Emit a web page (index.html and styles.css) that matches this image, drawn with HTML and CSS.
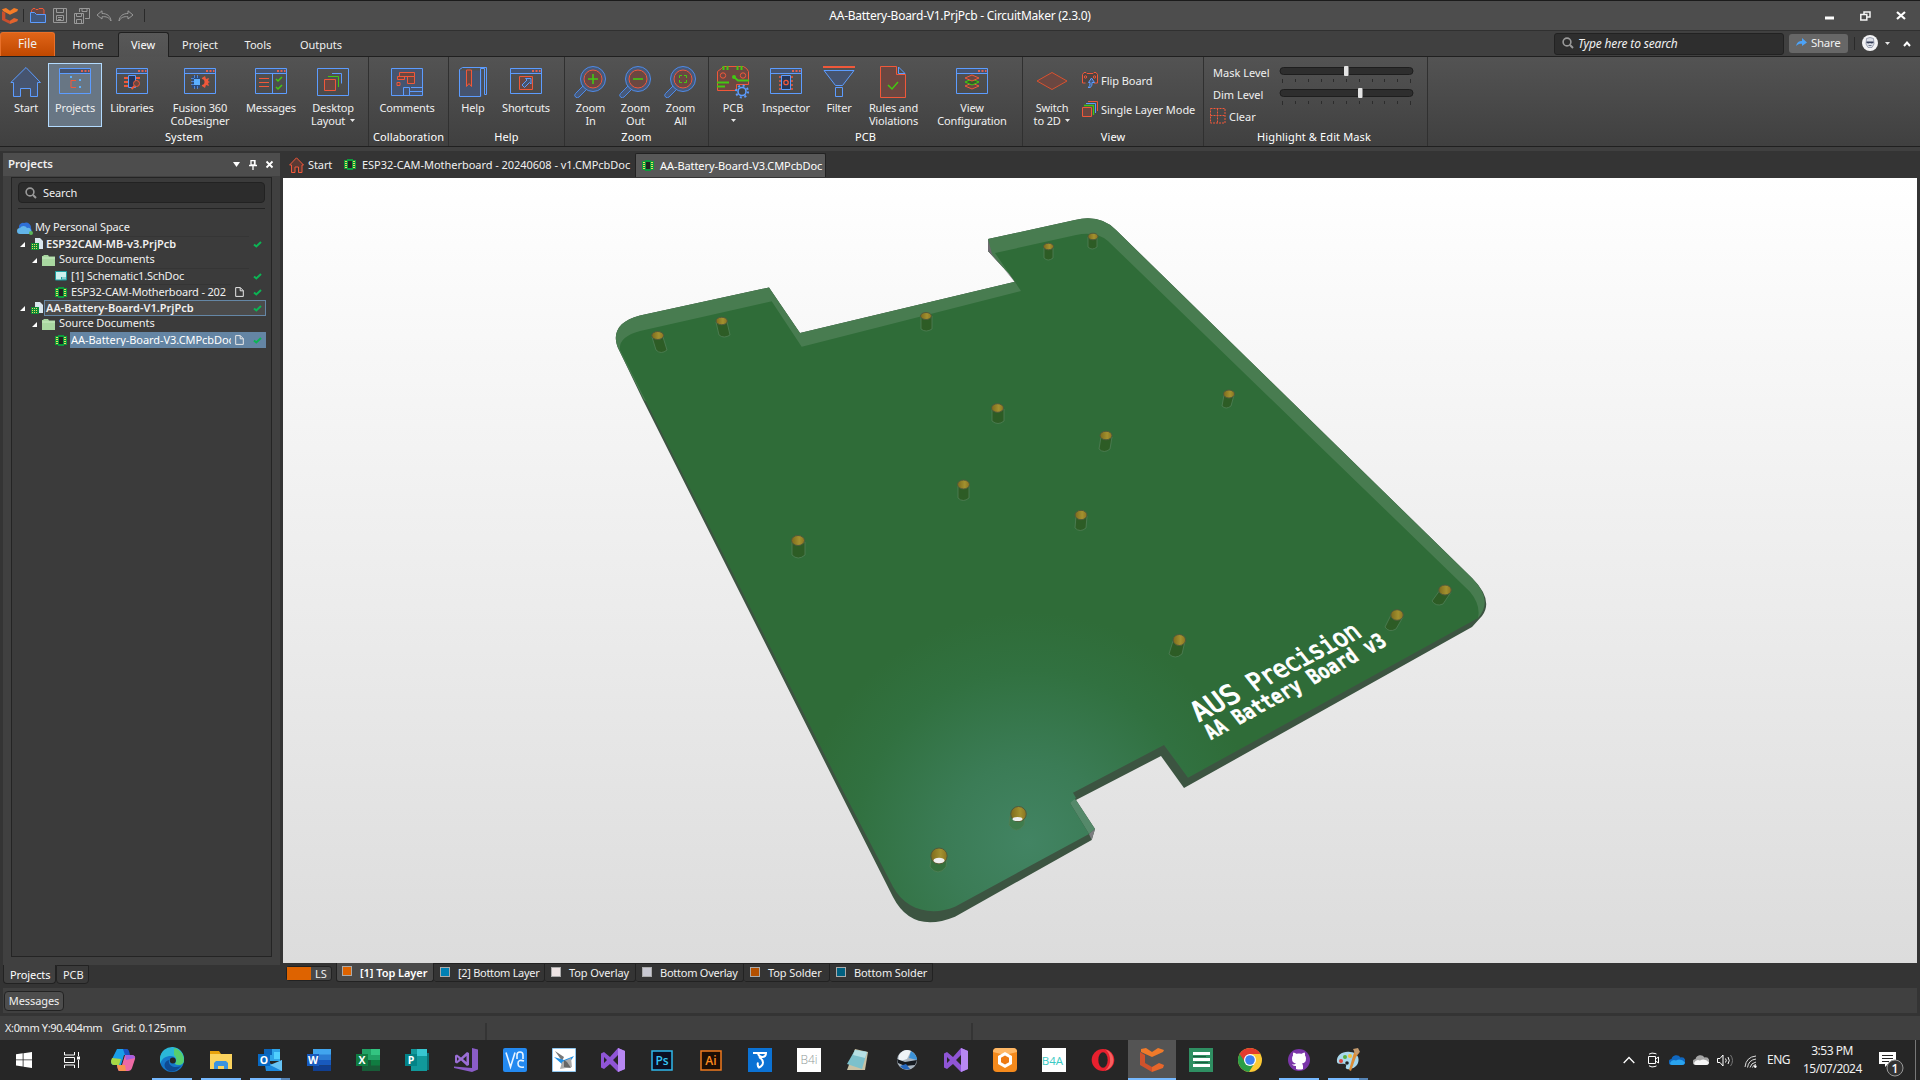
FILE: index.html
```html
<!DOCTYPE html>
<html lang="en">
<head>
<meta charset="utf-8">
<title>AA-Battery-Board-V1.PrjPcb - CircuitMaker (2.3.0)</title>
<link rel="stylesheet" href="styles.css">
</head>
<body>
<svg class="defs" width="0" height="0">
  <defs>
    <symbol id="logo" viewBox="0 0 24 24"><path d="M0 2l6-2 6 4 6-4 6 2-1 3-11 5L2 5z" fill="#f57c27"/><path d="M0 5l5 2v9l7 3v5L0 18z" fill="#c94f2e"/><path d="M12 19l6-4 6 2-1 3-11 4z" fill="#e2632d"/></symbol>
    <symbol id="win" viewBox="0 0 32 32"><path d="M.5 2.500h31v5H.5z" fill="#46546f"/><path d="M.5 2.500h31v25H.5zM0 7.500h32" fill="none" stroke="#5c9cff"/><path d="M22 4h2v2h-2zM25.500 4h2v2h-2zM29 4h1.500v2H29z" fill="#e0604f"/></symbol>
    <symbol id="lens" viewBox="0 0 32 32"><path d="M10 19L1.500 27.500a2.300 2.300 0 0 0 3.500 3.500L14 22z" fill="#46597a" stroke="#4f8be8"/><circle cx="19" cy="13" r="12.500" fill="#46597a" stroke="#4f8be8"/><circle cx="19" cy="13" r="9" fill="#6b4741" stroke="#f0583a"/></symbol>
    <symbol id="chip" viewBox="0 0 12 11"><path d="M0 1h3V0h6v1h3v9H9v1H3v-1H0z" fill="#0d9a3c"/><path d="M4 2h4v7H4z" fill="#222"/><path d="M1 2.500h2M1 4.500h2M1 6.500h2M1 8.500h2M9 2.500h2M9 4.500h2M9 6.500h2M9 8.500h2" stroke="#e6e25a"/></symbol>
    <symbol id="tick" viewBox="0 0 9 7"><path d="M1 3.500l2.300 2L8 1" fill="none" stroke="#0cb454" stroke-width="2"/></symbol>
    <symbol id="page" viewBox="0 0 9 10"><path d="M.7.600h4.600l3 3v5.800H.7zM5.200.600v3.200h3.100" fill="none" stroke="#e8e8e8"/></symbol>
    <symbol id="prj" viewBox="0 0 12 12"><path d="M4 0h5l3 3v8H4z" fill="#d9e6ee"/><path d="M0 5h8v7H0z" fill="#0d8a38"/><path d="M1 6.500h6M1 8.500h6M1 10.500h6" stroke="#e6e25a" stroke-dasharray="1 1"/></symbol>
    <symbol id="folder" viewBox="0 0 13 11"><path d="M0 1h1l1-1h4l1 1.500h6V11H0z" fill="#a9d8a1"/><path d="M0 3h13" stroke="#c9ecc2"/></symbol>
    <symbol id="open" viewBox="0 0 5 5"><path d="M5 0v5H0z" fill="#fff"/></symbol>
    <symbol id="mag" viewBox="0 0 12 12"><circle cx="5" cy="5" r="3.900" fill="none" stroke="#9a9a9a" stroke-width="1.600"/><path d="M8 8l3 3" stroke="#9a9a9a" stroke-width="2"/></symbol>
    <symbol id="down" viewBox="0 0 5 3"><path d="M0 0h5L2.500 3z" fill="#e8e8e8"/></symbol>
    <symbol id="vs" viewBox="0 0 24 24"><path d="M17 0l7 3v18l-7 3-8-8-6 5-3-1.500v-14L3 4l6 5zM17 7l-5 5 5 5zM3 9v6l3-3z" fill="#8f55d6" fill-rule="evenodd"/><path d="M17 0l7 3v18l-7 3z" fill="#b787f2"/></symbol>
    <symbol id="cloud" viewBox="0 0 16 10"><path d="M3 10a3 3 0 0 1-.5-6A5 5 0 0 1 11.500 2.500 3.800 3.800 0 0 1 13.500 10z"/></symbol>
  </defs>
</svg>

<header class="titlebar">
  <div class="quick">
    <svg width="16" height="16"><use href="#logo"/></svg><i class="vbar"></i>
    <svg class="q1" width="16" height="16" viewBox="0 0 16 16" fill="none"><path d="M1.500 7V2.500L3 .5h2l1 1h2l1-1h4l1 1.500V7" fill="#6b4741" stroke="#f0583a"/><path d="M.5 14.500v-10h4l2 2h9v8z" fill="#40587f" stroke="#5c9cff"/></svg>
    <svg class="q2" width="14" height="16" viewBox="0 0 14 16" fill="none" stroke="#999"><path d="M.5.5h13v14H.5zM3.500.5v4h7v-4M3.500 7.500h7v5h-7zM5 9.500h4M5 11.500h3"/></svg>
    <svg class="q3" width="16" height="16" viewBox="0 0 16 16" fill="none" stroke="#999"><path d="M.5 5.500h9v10h-9zM2.500 5.500v3h5v-3M2.500 15.500v-4h5v4M5.500 4V.5h10v10H11M8 .5v3h5v-3"/></svg>
    <svg class="q4" width="16" height="12" viewBox="0 0 16 12" fill="none" stroke="#999"><path d="M6 .8L1 5l5 4V6.800c4-.6 7 .5 9 4.200-.5-5-4-7.500-9-7.500z"/></svg>
    <svg class="q5" width="16" height="12" viewBox="0 0 16 12" fill="none" stroke="#999"><path d="M10 .8L15 5l-5 4V6.800c-4-.6-7 .5-9 4.200.5-5 4-7.500 9-7.500z"/></svg><i class="vbar"></i>
  </div>
  <h1>AA-Battery-Board-V1.PrjPcb - CircuitMaker (2.3.0)</h1>
  <div class="wincontrols">
    <svg width="10" height="10" viewBox="0 0 10 10"><path d="M0 5.500h9v3H0z" fill="#fff"/></svg>
    <svg width="11" height="10" viewBox="0 0 11 10" fill="none" stroke="#f4f4f4" stroke-width="1.500"><path d="M.8 3.500h6v5.500h-6zM4 3V1h6v5H7"/></svg>
    <svg width="10" height="9" viewBox="0 0 10 9"><path d="M1 1l8 7M9 1L1 8" stroke="#fff" stroke-width="2.200"/></svg>
  </div>
</header>

<nav class="tabs">
  <b class="file">File</b>
  <span class="tab home">Home</span><span class="tab active">View</span><span class="tab proj">Project</span><span class="tab tools">Tools</span><span class="tab outs">Outputs</span>
  <div class="tabright">
    <div class="typehere"><svg width="12" height="12"><use href="#mag"/></svg><em>Type here to search</em></div>
    <div class="share"><svg width="11" height="9" viewBox="0 0 11 9"><path d="M0 8c1-4 3-5 6-5V0l5 4.500L6 8V5.800C4 5.600 2 6 0 8z" fill="#4da3f7"/></svg>Share</div>
    <i class="vbar"></i>
    <svg width="16" height="16" viewBox="0 0 16 16"><circle cx="8" cy="8" r="8" fill="#f3f3f5"/><path d="M4.500 3.500Q8 1.500 11.500 3.500L12 9l-2 3.500H6L4 9z" fill="#dcdfe6" stroke="#8a90a4" stroke-width=".8"/><path d="M4.500 6.500h7V8L9.500 8.500 8 8l-1.500.5-2-.5z" fill="#353d58"/><path d="M6.500 10.500h3" stroke="#6b738a"/></svg>
    <svg class="dd" width="5" height="3"><use href="#down"/></svg>
    <svg class="up" width="8" height="6" viewBox="0 0 8 6"><path d="M1 5l3-3.500L7 5" fill="none" stroke="#fff" stroke-width="2"/></svg>
  </div>
</nav>

<section class="ribbon">
  <div class="group g-system">
    <div class="tools-row">
      <div class="btn w44"><svg width="32" height="32" viewBox="0 0 32 32"><path d="M3.500 16.500v14h7v-8h10v8h7v-14h3L16 1.500.8 16.500z" fill="#46546f" stroke="#5c9cff"/></svg><span>Start</span></div>
      <div class="btn w54 on"><svg width="32" height="32" viewBox="0 0 32 32"><use href="#win"/><path d="M17 14.500h-5v7h5" fill="none" stroke="#f0583a"/><path d="M11 10h2v2h-2zM20 13h2v2h-2zM20 20h2v2h-2z" fill="#5cb0ff"/></svg><span>Projects</span></div>
      <div class="btn w60"><svg width="32" height="32" viewBox="0 0 32 32"><use href="#win"/><path d="M8 12h4M8 16h4M8 20h4M20 12h4" stroke="#f0583a" stroke-width="2"/><path d="M12.500 9.500h7v12h-7z" fill="#26375a" stroke="#5c9cff"/><circle cx="20.500" cy="17.500" r="3" fill="#6b4741" stroke="#f0583a"/><path d="M18.500 20l-3 3" stroke="#f0583a" stroke-width="2"/></svg><span>Libraries</span></div>
      <div class="btn w76"><svg width="32" height="32" viewBox="0 0 32 32"><use href="#win"/><path d="M18 9v3l3-2 1 3 3-1-1 3 2 1-2 1 1 3-3-1-1 3-3-2v3z" fill="#f0583a"/><circle cx="17.500" cy="16" r="3" fill="#444"/><path d="M8 10h8v12H8z" fill="#2d4a78"/><path d="M10 13h6v6h-6z" fill="#5cb0ff"/><path d="M7 12.500h3M7 15.500h3M7 18.500h3M10.500 9v3M13.500 9v3M10.500 20v3M13.500 20v3" stroke="#5c9cff" stroke-width=".7"/></svg><span>Fusion 360<br>CoDesigner</span></div>
      <div class="btn w66"><svg width="32" height="32" viewBox="0 0 32 32"><use href="#win"/><path d="M4 12.500h10M4 16.500h10M4 20.500h10" stroke="#f0583a"/><path d="M17.500 8v19" stroke="#5c9cff"/><path d="M21 13l2 2 4-4M21 21l2 2 4-4" fill="none" stroke="#43c813" stroke-width="1.500"/></svg><span>Messages</span></div>
      <div class="btn w58"><svg width="32" height="32" viewBox="0 0 32 32"><path d="M.5 2.500h31v27H.5z" fill="none" stroke="#5c9cff"/><path d="M15 7.500h9.500v10" fill="none" stroke="#5c9cff"/><path d="M11 10.500h10.500V21" fill="none" stroke="#43c813"/><path d="M7.500 13.500h11v11h-11z" fill="#6b4741" stroke="#f0583a"/></svg><span>Desktop<br>Layout <svg width="5" height="3"><use href="#down"/></svg></span></div>
    </div>
    <h2>System</h2>
  </div>
  <div class="group g-collab">
    <div class="tools-row">
      <div class="btn w76"><svg width="32" height="32" viewBox="0 0 32 32"><path d="M.5 2.500h31v27H.5z" fill="#46546f" stroke="#5c9cff"/><path d="M8.500 6.500h15v4h-15zM6.500 10.500h7v3h-7zM16.500 10.500h7v7h-7zM6 16.500h3v3H6z" fill="#6b4741" stroke="#f0583a"/><path d="M12.500 21.500h6v8h-6zM20 21.500h11.500M19 25.500h12" fill="none" stroke="#5c9cff"/></svg><span>Comments</span></div>
    </div>
    <h2>Collaboration</h2>
  </div>
  <div class="group g-help">
    <div class="tools-row">
      <div class="btn w44"><svg width="28" height="32" viewBox="0 0 28 32"><path d="M.5 4.500h23v26H.5z" fill="#46546f"/><path d="M.5 30.500v-27l3-2h24v27h-2v-26h-4v28z" fill="none" stroke="#5c9cff"/><path d="M7.500 4v16.500l2.500-3 2.500 3V4z" fill="#6b4741" stroke="#f0583a"/></svg><span>Help</span></div>
      <div class="btn w62"><svg width="32" height="32" viewBox="0 0 32 32"><use href="#win"/><path d="M9.500 10.500h13v13h-13z" fill="#6b4741" stroke="#f0583a"/><path d="M12 19l5-5-1.500-1.500H21V18l-1.500-1.500-5 5z" fill="#46546f" stroke="#5c9cff"/></svg><span>Shortcuts</span></div>
    </div>
    <h2>Help</h2>
  </div>
  <div class="group g-zoom">
    <div class="tools-row">
      <div class="btn w45"><svg width="32" height="32" viewBox="0 0 32 32"><use href="#lens"/><path d="M14 13h10M19 8v10" stroke="#43c813" stroke-width="1.600"/></svg><span>Zoom<br>In</span></div>
      <div class="btn w45"><svg width="32" height="32" viewBox="0 0 32 32"><use href="#lens"/><path d="M14 13h10" stroke="#43c813" stroke-width="1.600"/></svg><span>Zoom<br>Out</span></div>
      <div class="btn w45"><svg width="32" height="32" viewBox="0 0 32 32"><use href="#lens"/><path d="M15.500 12V9.500H18M20 9.500h2.500V12M22.500 14v2.500H20M18 16.500h-2.500V14" fill="none" stroke="#43c813"/></svg><span>Zoom<br>All</span></div>
    </div>
    <h2>Zoom</h2>
  </div>
  <div class="group g-pcb">
    <div class="tools-row">
      <div class="btn w44"><svg width="34" height="32" viewBox="0 0 34 32"><path d="M1.500 24.500v-19l4-3 2-2h20l3 2 2 3v13h-12v6z" fill="#6b4741" stroke="#f0583a"/><path d="M7.500 0v4M11.500 0v4M21.500 0v4M25.500 0v4" stroke="#43c813" stroke-width="2"/><circle cx="7" cy="9.500" r="2.700" fill="none" stroke="#f0583a"/><circle cx="27" cy="9.500" r="2.700" fill="none" stroke="#f0583a"/><path d="M1 16.500h12M1 20.500h8M18 11l4 3.500h11" stroke="#43c813" stroke-width="1.800" fill="none"/><circle cx="18" cy="11" r="2" fill="#43c813"/><circle cx="26" cy="25.500" r="4" fill="#444" stroke="#5c9cff" stroke-width="1.600"/><circle cx="26" cy="25.500" r="6" fill="none" stroke="#5c9cff" stroke-width="2" stroke-dasharray="2 2.700"/></svg><span>PCB<br><svg class="c" width="5" height="3"><use href="#down"/></svg></span></div>
      <div class="btn w62"><svg width="32" height="32" viewBox="0 0 32 32"><use href="#win"/><path d="M9 11h3M9 15h3M9 19h3M9 23h3M20 11h3M20 15h3M20 19h3M20 23h3" stroke="#f0583a" stroke-width="1.600"/><path d="M11.500 9.500h9v14h-9z" fill="#26375a" stroke="#5c9cff"/><circle cx="16" cy="16.500" r="2.200" fill="none" stroke="#f0583a" stroke-width="1.300"/></svg><span>Inspector</span></div>
      <div class="btn w44"><svg width="32" height="32" viewBox="0 0 32 32"><path d="M0 1h32" stroke="#f0583a" stroke-width="2"/><path d="M1 4.500h30L19.500 19.500h-7z" fill="#46546f" stroke="#5c9cff"/><path d="M12.500 21.500h7v9h-7z" fill="none" stroke="#5c9cff"/></svg><span>Filter</span></div>
      <div class="btn w65"><svg width="28" height="32" viewBox="0 0 28 32"><path d="M1.500.5h16v8h9v23h-25z" fill="#6b4741" stroke="#f0583a"/><path d="M19.500 1v6.500h6.500z" fill="none" stroke="#5c9cff"/><path d="M9 19l4 4 6-7" fill="none" stroke="#43c813" stroke-width="1.500"/></svg><span>Rules and<br>Violations</span></div>
      <div class="btn w92"><svg width="32" height="32" viewBox="0 0 32 32"><use href="#win"/><path d="M9 20l7-3 7 3-7 3z" fill="#6b4741" stroke="#f0583a"/><path d="M9 16l7-3 7 3-7 3z" fill="#355d2a" stroke="#43c813"/><path d="M9 12l7-3 7 3-7 3z" fill="#6b4741" stroke="#f0583a"/></svg><span>View<br>Configuration</span></div>
    </div>
    <h2>PCB</h2>
  </div>
  <div class="group g-view">
    <div class="tools-row">
      <div class="btn w50"><svg width="32" height="32" viewBox="0 0 32 32"><path d="M1 15l15-8.500L31 15l-15 8.500z" fill="#6b4741" stroke="#d9522f"/></svg><span>Switch<br>to 2D <svg width="5" height="3"><use href="#down"/></svg></span></div>
      <div class="smalls">
        <div><svg width="16" height="16" viewBox="0 0 16 16"><path d="M.5 11V2.500L2 .5h12l1.500 2V11z" fill="#4d4341"/><path d="M.5 11V2.500L2 .5h2l1 1h6l1-1h2l1.500 2V11M.5 11h3M12 11h3.500" fill="none" stroke="#f0583a"/><circle cx="3.500" cy="5" r="1.200" fill="none" stroke="#f0583a"/><circle cx="12.500" cy="5" r="1.200" fill="none" stroke="#f0583a"/><path d="M6 15.500h2c2-1 2-3 2-5h2.500L9.500 6 6.500 10.500H8c0 2 0 4-2 5z" fill="#40587f" stroke="#5c9cff"/></svg>Flip Board</div>
        <div><svg width="16" height="16" viewBox="0 0 16 16" fill="none"><path d="M6 .5h9.500V10" stroke="#f0583a"/><path d="M4 2.500h9.500V12" stroke="#5c9cff"/><path d="M2 4.500h9.500V14" stroke="#43c813" stroke-width="1.300"/><path d="M.5 6.500h9v9h-9z" fill="#6b4741" stroke="#f0583a"/></svg>Single Layer Mode</div>
      </div>
    </div>
    <h2>View</h2>
  </div>
  <div class="group g-mask">
    <div class="mask">
      <div class="lvl"><label>Mask Level</label><svg width="136" height="22" viewBox="0 0 136 22"><rect x="1" y="4.500" width="133" height="7" rx="3.500" fill="#2e2e2e" stroke="#1e1e1e"/><path d="M3.500 16v4M16.500 16v3M29.500 16v3M42.500 16v3M54.500 16v3M67.500 16v3M80.500 16v3M93.500 16v3M105.500 16v3M118.500 16v3M131.500 16v4" stroke="#2c2c2c"/><rect x="65" y="3" width="4.500" height="10" rx="1" fill="#e4e4e4"/></svg></div>
      <div class="lvl"><label>Dim Level</label><svg width="136" height="22" viewBox="0 0 136 22"><rect x="1" y="4.500" width="133" height="7" rx="3.500" fill="#2e2e2e" stroke="#1e1e1e"/><path d="M3.500 16v4M16.500 16v3M29.500 16v3M42.500 16v3M54.500 16v3M67.500 16v3M80.500 16v3M93.500 16v3M105.500 16v3M118.500 16v3M131.500 16v4" stroke="#2c2c2c"/><rect x="79" y="3" width="4.500" height="10" rx="1" fill="#e4e4e4"/></svg></div>
      <div class="clear"><svg width="16" height="16" viewBox="0 0 16 16"><path d="M.5.5h14.500v14.500H.5zM7.500.5v15M.5 7.500h15" fill="none" stroke="#f0583a" stroke-dasharray="2 1"/></svg>Clear</div>
    </div>
    <h2>Highlight &amp; Edit Mask</h2>
  </div>
</section>

<main class="work">
  <aside class="panel">
    <div class="phead"><b>Projects</b>
      <svg width="7" height="5" viewBox="0 0 7 5"><path d="M0 0h7L3.500 5z" fill="#fff"/></svg>
      <svg width="8" height="10" viewBox="0 0 8 10"><path d="M2 .700h4V5H2zM5.500 0v5M0 5.500h8M4 6v4" fill="none" stroke="#fff" stroke-width="1.300"/></svg>
      <svg width="7" height="7" viewBox="0 0 7 7"><path d="M.5.5l6 6M6.500.5l-6 6" stroke="#fff" stroke-width="1.800"/></svg>
    </div>
    <div class="pbox">
      <div class="psearch"><svg width="12" height="12"><use href="#mag"/></svg><span>Search</span></div>
      <hr>
      <div class="tree">
        <div class="row r0"><svg width="16" height="13" viewBox="0 0 16 13"><path d="M5 9a4 4 0 0 1 2-8 5 5 0 0 1 7 5l1 4z" fill="#2f6fd6"/><path d="M3 12a3 3 0 0 1 0-6 4 4 0 0 1 7 0 3 3 0 0 1 2 6z" fill="#62b5ea"/><circle cx="14" cy="11" r="2" fill="#5bb85b"/></svg><span>My Personal Space</span></div>
        <div class="row r1 line"><svg width="5" height="5"><use href="#open"/></svg><svg width="12" height="12"><use href="#prj"/></svg><b class="cell">ESP32CAM-MB-v3.PrjPcb</b><svg class="t" width="9" height="7"><use href="#tick"/></svg></div>
        <div class="row r2"><svg width="5" height="5"><use href="#open"/></svg><svg width="13" height="11"><use href="#folder"/></svg><span>Source Documents</span></div>
        <div class="row r3"><svg width="12" height="10" viewBox="0 0 12 10"><path d="M.5.500h11v8.500H.5z" fill="#cdf1ef" stroke="#1d9fa0"/><path d="M6 6h5v2.500H6z" fill="#1d9fa0"/><path d="M7 7h4" stroke="#fff"/></svg><span class="cell">[1] Schematic1.SchDoc</span><svg class="t" width="9" height="7"><use href="#tick"/></svg></div>
        <div class="row r3"><svg width="12" height="11"><use href="#chip"/></svg><span class="cell">ESP32-CAM-Motherboard - 202</span><svg class="pg" width="9" height="10"><use href="#page"/></svg><svg class="t" width="9" height="7"><use href="#tick"/></svg></div>
        <div class="row r1"><svg width="5" height="5"><use href="#open"/></svg><svg width="12" height="12"><use href="#prj"/></svg><div class="cell boxed"><b>AA-Battery-Board-V1.PrjPcb</b><svg class="t" width="9" height="7"><use href="#tick"/></svg></div></div>
        <div class="row r2"><svg width="5" height="5"><use href="#open"/></svg><svg width="13" height="11"><use href="#folder"/></svg><span>Source Documents</span></div>
        <div class="row r3"><svg width="12" height="11"><use href="#chip"/></svg><div class="cell sel"><span class="clip">AA-Battery-Board-V3.CMPcbDoc</span><svg class="pg" width="9" height="10"><use href="#page"/></svg><svg class="t" width="9" height="7"><use href="#tick"/></svg></div></div>
      </div>
    </div>
    <div class="ptabs"><span class="cur">Projects</span><span>PCB</span></div>
  </aside>

  <section class="editor">
    <div class="docs">
      <div class="doc d1"><svg width="15" height="16" viewBox="0 0 15 16"><path d="M2.500 8v7.500H6V10h3.500v5.500H13V8h1.500L7.500.8.600 8z" fill="#5a3a34" stroke="#f0583a"/></svg>Start</div>
      <div class="doc d2"><svg width="12" height="11"><use href="#chip"/></svg>ESP32-CAM-Motherboard - 20240608 - v1.CMPcbDoc</div>
      <div class="doc d3"><svg width="12" height="11"><use href="#chip"/></svg>AA-Battery-Board-V3.CMPcbDoc</div>
    </div>
    <svg class="canvas" width="1634" height="785" viewBox="283 178 1634 785">
      <defs>
        <linearGradient id="bg" x1="0" y1="0" x2="0" y2="1"><stop offset="0" stop-color="#fff"/><stop offset="1" stop-color="#dcdcdc"/></linearGradient>
        <radialGradient id="glow" gradientUnits="userSpaceOnUse" cx="1028" cy="842" r="230"><stop offset="0" stop-color="#428463"/><stop offset=".35" stop-color="#3b7c56"/><stop offset=".75" stop-color="#317140"/><stop offset="1" stop-color="#2f6c38"/></radialGradient>
        <linearGradient id="gold"><stop offset="0" stop-color="#7d6a1c"/><stop offset=".6" stop-color="#a3912f"/><stop offset="1" stop-color="#8a7420"/></linearGradient>
      </defs>
      <path d="M283 178h1634v785H283z" fill="url(#bg)"/>
      <path d="M619 350C611 334 618 321 640 315.500L769 287.500 800 333 1016 281.500 988 251V239L1075 220Q1100 214 1116 230L1472 578Q1494 600 1482 616L1472 627 1184 788 1161 756 1076 800 1095 829 1091.700 840 955 916.700Q912 934 893 897L840 792 643 400z" fill="#3c5441"/>
      <path d="M619 350C611 334 618 321 640 315.500L769 287.500 800 333 1016 281.500 988 251V239L1075 220Q1100 214 1116 230L1472 578Q1494 600 1478 618L1420 640 1100 700 644 400z" fill="#487c50"/>
      <path d="M988 239v12l28 31 6 9-30-37z" fill="#6e6a70"/>
      <path d="M1073 798l3 2 19 29-6 5-19-31z" fill="#55896a"/><path d="M1095 829l-6 5 2.700 6z" fill="#7c7d80"/>
      <path d="M620 350Q618 337 640 331L771.700 301.300 801.700 346.700 1021 291 995 253 1076 235Q1096 231 1108 241L1470 591.700Q1481 605 1478 618L1188 777.700 1164 745 1073 792.700 1076 798 1070 803 1089 834 955 906.700C930 917 905 909 893 886.700L840 785z" fill="url(#glow)"/>
      <g stroke="#507f57" stroke-width=".8" fill="#2d5c25">
        <path d="M652 337l4 13q5 5 11 0l-4-13z"/><path d="M716 322l3 13q5 4 11 0l-3-13z"/><path d="M921 316v13q5 4 11 0v-13z"/>
        <path d="M1044 248v10q4 4 9 0v-10z"/><path d="M1088 237v10q4 4 9 0v-10z"/><path d="M992 409v12q6 5 12 0v-12z"/><path d="M1101 437l-2 12q5 5 11 0l2-12z"/><path d="M1224 395l-2 11q4 4 9 0l3-11z"/><path d="M958 486v12q5 5 11 0v-12z"/><path d="M1076 516l-1 12q5 5 11 0l1-12z"/><path d="M792 542v13q6 6 13 0v-13z"/>
        <path d="M1173 641l-4 13q6 6 13 0l3-13z"/><path d="M1391 615l-6 12q4 6 11 2l7-12z"/><path d="M1440 590l-8 11q4 6 11 3l8-12z"/>
        <path d="M1010 816l-1 9q7 10 15 0l1-9z" fill="#3f7c4c"/><path d="M931 858l-1 9q8 10 16 0l1-9z" fill="#35703c"/>
      </g>
      <g fill="url(#gold)" stroke="#4f5a3c" stroke-width="1">
        <ellipse cx="657.700" cy="335.500" rx="6" ry="4"/><ellipse cx="721.700" cy="321" rx="5.700" ry="3.800"/><ellipse cx="926" cy="316" rx="5.500" ry="3.500"/><ellipse cx="1048.500" cy="246.500" rx="5" ry="3.300"/><ellipse cx="1093" cy="236.500" rx="5" ry="3.300"/><ellipse cx="997.500" cy="408" rx="6" ry="4.300"/><ellipse cx="1106" cy="435.500" rx="6" ry="4.300"/><ellipse cx="1229" cy="394" rx="5.500" ry="4"/><ellipse cx="963.500" cy="484.500" rx="6" ry="4.500"/><ellipse cx="1081" cy="515" rx="6" ry="4.700"/><ellipse cx="798" cy="540.500" rx="6.500" ry="5"/><ellipse cx="1179.300" cy="640" rx="6.300" ry="5.500"/><ellipse cx="1397" cy="615" rx="6.300" ry="5.300"/><ellipse cx="1445" cy="590" rx="6.300" ry="5"/><ellipse cx="1018.500" cy="814" rx="7.800" ry="7.500"/><ellipse cx="939" cy="856" rx="8.200" ry="8"/>
      </g>
      <ellipse cx="1017.500" cy="819" rx="5" ry="2" fill="#eee"/><ellipse cx="939" cy="860.500" rx="5.500" ry="2.700" fill="#eee"/>
      <g class="silk">
        <text transform="matrix(.887 -.462 .74 .95 1199 722)" font-size="23.500" textLength="50" lengthAdjust="spacingAndGlyphs">AUS</text>
        <text transform="matrix(.887 -.462 .7 .88 1255 692)" font-size="23.500" textLength="122">Precision</text>
        <text class="fine" transform="matrix(.882 -.475 .77 .99 1211 740)" font-size="17.400" font-weight="bold" textLength="201">AA Battery Board v3</text>
      </g>
    </svg>
    <div class="layers">
      <div class="ls"><i></i>LS</div>
      <div class="ly l1 cur"><i class="c-top"></i>[1] Top Layer</div>
      <div class="ly l2"><i class="c-bot"></i>[2] Bottom Layer</div>
      <div class="ly l3"><i class="c-to"></i>Top Overlay</div>
      <div class="ly l4"><i class="c-bo"></i>Bottom Overlay</div>
      <div class="ly l5"><i class="c-ts"></i>Top Solder</div>
      <div class="ly l6"><i class="c-bs"></i>Bottom Solder</div>
    </div>
  </section>
</main>

<div class="msgbar"><span>Messages</span></div>
<div class="status"><span class="xy">X:0mm Y:90.404mm</span><span class="grid">Grid: 0.125mm</span><i class="s1"></i><i class="s2"></i></div>

<footer class="taskbar">
  <div class="slot s48"><svg width="16" height="16" viewBox="0 0 16 16"><path d="M0 2.300l6.700-1v6.200H0zM7.500 1.200L16 0v7.500H7.500zM0 8.300h6.700v6.200L0 13.500zM7.500 8.300H16V16l-8.500-1.300z" fill="#fff"/></svg></div>
  <div class="slot s48 tv"><svg width="16" height="16" viewBox="0 0 16 16" fill="none" stroke="#fff"><path d="M.5 0v3h10V0M.5 16v-3h10v3M.5 5.500h10v5H.5zM14.500 0v4M14.500 8v8"/><path d="M13 4.500h3v3h-3z" fill="#fff" stroke="none"/></svg></div>
  <div class="slot"><svg width="24" height="22" viewBox="0 0 24 22"><path d="M6 0h10l2 6h-5L10 16H3q-3 0-3-4z" fill="#1a9ee8"/><path d="M1 9l9 1-2 6H3q-3 0-3-4z" fill="#a8d843"/><path d="M12 0h4q2 0 3 6h-5z" fill="#1b52c4"/><path d="M14 6h6q5 0 4 4l-3 9q-1 3-4 3H8q-1 0-2-6h5z" fill="#ee6aa5"/><path d="M14 6h6q4 0 4 3l-9 2z" fill="#a45fe0"/><path d="M6 16h8l1 6H9q-2 0-3-6z" fill="#f8934e"/></svg></div>
  <div class="slot run"><svg width="24" height="24" viewBox="0 0 24 24"><circle cx="12" cy="12" r="12" fill="#1577c8"/><path d="M0 10A12 12 0 0 1 24 12c0 5-5 6-9 4 2-3 1-8-4-8S2 10 0 16z" fill="#2bb7d8"/><path d="M14 .2C21 1 25 9 23.600 14c-2 4-6 3-8.600 2 2-2 2-7-1-9z" fill="#56cf6d"/><path d="M9 12c-1 5 4 9 12 6-4 6-11 7-15 3-3-4-1-8 3-9z" fill="#0f4a92"/><circle cx="12.800" cy="12.500" r="3" fill="#252525"/></svg></div>
  <div class="slot run"><svg width="22" height="18" viewBox="0 0 22 18"><path d="M0 0h9l2 3H0z" fill="#e8a20c"/><path d="M0 3h22v15H0z" fill="#fbd35e"/><path d="M4 18v-6l2-2h10l2 2v6h-4v-3H8v3z" fill="#3c93e0"/></svg></div>
  <div class="slot run multi"><svg width="24" height="22" viewBox="0 0 24 22"><path d="M6 0h16v12H6z" fill="#2ea4e8"/><path d="M6 0h8v6H6z" fill="#0c64b8"/><path d="M16 3h6v7h-6z" fill="#50d0ff"/><path d="M6 11l9 5 9-5v11H8z" fill="#1c87dc"/><path d="M24 11v11L12 16z" fill="#66c3f5"/><path d="M0 5h12v12H0z" fill="#0768c2"/><text x="6" y="15" class="ico">O</text></svg></div>
  <div class="slot"><svg width="24" height="22" viewBox="0 0 24 22"><path d="M6 0h18v6H6z" fill="#41a5ee"/><path d="M6 5.500h18V11H6z" fill="#2b7cd3"/><path d="M6 11h18v5.500H6z" fill="#185abd"/><path d="M6 16.500h18V22H6z" fill="#103f91"/><path d="M0 5h12v12H0z" fill="#185abd"/><text x="6" y="15" class="ico">W</text></svg></div>
  <div class="slot"><svg width="24" height="22" viewBox="0 0 24 22"><path d="M6 0h18v11H6z" fill="#21a366"/><path d="M15 0h9v6h-9z" fill="#33c481"/><path d="M6 11h18v11H6z" fill="#185c37"/><path d="M15 11h9v5.500h-9z" fill="#107c41"/><path d="M0 5h12v12H0z" fill="#107c41"/><text x="6" y="15" class="ico">X</text></svg></div>
  <div class="slot"><svg width="24" height="22" viewBox="0 0 24 22"><path d="M6 0h16v22H6z" fill="#11999b"/><path d="M12 0h10v7H12z" fill="#37c6d0"/><path d="M22 4h2v17h-2z" fill="#0b6f74"/><path d="M0 5h12v12H0z" fill="#038387"/><text x="6" y="15" class="ico">P</text></svg></div>
  <div class="slot"><svg width="24" height="24" viewBox="0 0 24 24"><path d="M18 0l6 1.500v20L18 24 0 20v-1.500l18 1.500z" fill="#8a5cc7"/><path d="M3 6.500l4 3 6-5.500 2 1v12l-2 1-6-5.500-4 3-2-1v-7zM12.500 8L9 11l3.500 3zM3 9v4l2-2z" fill="#9b6ed6" fill-rule="evenodd"/></svg></div>
  <div class="slot"><svg width="24" height="24" viewBox="0 0 24 24"><rect width="24" height="24" rx="2" fill="#2389f0"/><path d="M3 4.500L7.500 19 12 4.500M14 11V7q0-3 3-3t3 3v4M21 13q-6-2-6 2.500t6 3.500" fill="none" stroke="#e9f4ff" stroke-width="1.600"/></svg></div>
  <div class="slot"><svg width="24" height="24" viewBox="0 0 24 24"><path d="M.5.500h23v23H.5z" fill="#fff" stroke="#8fc6ef"/><path d="M3 3l9 6-2 4z" fill="#777"/><path d="M2 9l10 3 10-4-7 10-4-1z" fill="#1e90e8"/><path d="M10 14l9-4 1 9-12 2z" fill="#aaa"/><path d="M12 12l3 2 4 6-7-1z" fill="#666"/></svg></div>
  <div class="slot"><svg width="24" height="24"><use href="#vs"/></svg></div>
  <div class="slot"><svg width="22" height="21" viewBox="0 0 22 21"><path d="M1 1h20v19H1z" fill="#0b0f22" stroke="#2fb8ea" stroke-width="1.500"/><text x="11" y="15" class="ps">Ps</text></svg></div>
  <div class="slot"><svg width="22" height="21" viewBox="0 0 22 21"><path d="M1 1h20v19H1z" fill="#1d0e05" stroke="#f0791e" stroke-width="1.500"/><text x="11" y="15" class="ai">Ai</text></svg></div>
  <div class="slot"><svg width="24" height="24" viewBox="0 0 24 24"><path d="M0 0h24v24H0z" fill="#0b72d4"/><path d="M5 5h13q0 4-4 4-3 0-4-3.500M11 9q4 2.500 4 5.500t-4 5q-2-2-1-5" fill="none" stroke="#fff" stroke-width="2"/></svg></div>
  <div class="slot"><svg width="24" height="24" viewBox="0 0 24 24"><path d="M0 0h24v24H0z" fill="#fff"/><text x="12" y="16" class="b4">B4i</text></svg></div>
  <div class="slot"><svg width="24" height="22" viewBox="0 0 24 22"><path d="M9 0l13 3-3 18H1z" fill="#c9c2a5"/><path d="M9 1l12 2-5 17L1 15z" fill="#7cc1cc"/><path d="M9 1l12 2-2 6-12-3z" fill="#b6e0e4"/></svg></div>
  <div class="slot"><svg width="22" height="22" viewBox="0 0 22 22"><circle cx="11" cy="11" r="10" fill="#a9b4bf"/><path d="M3 6q5-7 12-4l-4 8-9 3z" fill="#f0f4f7"/><path d="M15 2q6 4 6 9l-8-2z" fill="#3c93d8"/><path d="M1 10l8 3 12-2-2 5-10 1-7-3z" fill="#151a20"/><path d="M4 17l6-2 4 5q-6 2-10-3z" fill="#2468c0"/></svg></div>
  <div class="slot"><svg width="24" height="24"><use href="#vs"/></svg></div>
  <div class="slot"><svg width="24" height="24" viewBox="0 0 24 24"><rect width="24" height="24" rx="4" fill="#f58a1c"/><path d="M0 4q0-4 4-4h16q4 0 4 4l-12 3z" fill="#ffb866"/><path d="M12 4l7 4v8l-7 4-7-4V8z" fill="#fff"/><path d="M12 7.500l4 2.200v4.600l-4 2.200-4-2.200V9.700z" fill="#ee7a12"/></svg></div>
  <div class="slot"><svg width="24" height="24" viewBox="0 0 24 24"><path d="M0 0h24v24H0z" fill="#fff"/><text x="10.500" y="17" class="b4a">B4A</text></svg></div>
  <div class="slot"><svg width="24" height="24" viewBox="0 0 24 24"><ellipse cx="12" cy="12" rx="11.300" ry="11" fill="#e8202e"/><path d="M14 1.300a11 11 0 0 1 0 21.400Q20 18 19 10 18 4 14 1.300z" fill="#f6605f"/><ellipse cx="12" cy="12" rx="4.700" ry="7.800" fill="#262626"/></svg></div>
  <div class="slot act"><svg width="24" height="24" viewBox="0 0 24 24"><path d="M1 1l5-1 6 4 6-4 6 2-1 2-11 5L1 4z" fill="#f07a2a"/><path d="M0 4l5 3v8l7 4v5L0 17z" fill="#d0522c"/><path d="M12 19l7-4 5 2-1 3-11 4z" fill="#e8662a"/></svg></div>
  <div class="slot"><svg width="24" height="24" viewBox="0 0 24 24"><path d="M0 0h24v24H0z" fill="#2f8f62"/><path d="M4 5.500h17M4 11.500h17M4 17.500h17" stroke="#fff" stroke-width="3"/><path d="M4 8.500h13M6 14.500h13" stroke="#1c5c3f"/></svg></div>
  <div class="slot"><svg width="24" height="24" viewBox="0 0 24 24"><circle cx="12" cy="12" r="12" fill="#fcc934"/><path d="M1.600 6A12 12 0 0 0 11 24l6-9.500-5-2.500z" fill="#2a9e47"/><path d="M12 6h10.400a12 12 0 0 0-20.800 0L7 14z" fill="#e33b2e"/><circle cx="12" cy="12" r="6" fill="#fff"/><circle cx="12" cy="12" r="4.800" fill="#3d7ff0"/></svg></div>
  <div class="slot run"><svg width="24" height="24" viewBox="0 0 24 24"><circle cx="12" cy="12" r="11" fill="#7a35a8"/><path d="M9 21v-3q-3 .5-4-2 2 1 4-.5-4-.5-4-5 0-2 1-3-.3-1.500.3-3 2 .3 3 1.200 2.700-.6 5.400 0 1-1 3-1.200.6 1.500.3 3 1 1 1 3 0 4.500-4 5 1 1 1 2.500v3q-3 1-7 0z" fill="#fff"/></svg></div>
  <div class="slot run multi"><svg width="24" height="24" viewBox="0 0 24 24"><path d="M1 14C0 7 7 3 14 4c7 0 10 6 8 11s-8 7-11 6 1-4-2-5-7 1-8-2z" fill="#a9d8ec"/><circle cx="5" cy="13" r="2" fill="#e2483d"/><circle cx="9" cy="9" r="2" fill="#58b03e"/><circle cx="14" cy="8" r="2" fill="#f4c23c"/><circle cx="11" cy="15" r="1.800" fill="#222"/><path d="M19 2l4 3-3 4-5 14-2-1 4-14z" fill="#dd8d37"/><path d="M17 1l5-1 2 4-4 3z" fill="#c49a6d"/></svg></div>
  <div class="tray">
    <svg class="t1" width="12" height="8" viewBox="0 0 12 8"><path d="M.7 7L6 1.500 11.300 7" fill="none" stroke="#fff" stroke-width="1.300"/></svg>
    <svg class="t2" width="13" height="16" viewBox="0 0 13 16" fill="none" stroke="#fff"><path d="M1.500 4.500h7v7h-7zM8.500 7l3-2v6l-3-2M2 2.200Q5 .3 8 1.500L9.500 2M2 13.800q3 2 6 .7l1.500-.6"/></svg>
    <svg class="t3" width="16" height="10" viewBox="0 0 16 10"><use href="#cloud" fill="#1068c0"/><path d="M1 8q2-4 6-2.500Q12 3 16 7.500 15.500 10 13 10H3q-2 0-2-2z" fill="#2aa4ee"/></svg>
    <svg class="t4" width="16" height="10" viewBox="0 0 16 10"><use href="#cloud" fill="#a6a6a6"/><path d="M1 8q2-4 6-2.500Q12 3 16 7.500 15.500 10 13 10H3q-2 0-2-2z" fill="#f6f6f6"/></svg>
    <svg class="t5" width="17" height="13" viewBox="0 0 17 13" fill="none" stroke="#fff"><path d="M.5 4.500h2.500l3-3.500v11l-3-3.500H.5zM8.500 4.500q1.500 2 0 4M11 3q2.500 3.500 0 7"/><path d="M13.500 1q4 5.500 0 11" stroke="#777"/></svg>
    <svg class="t6" width="13" height="13" viewBox="0 0 13 13" fill="none" stroke="#ddd"><path d="M1 12Q2 2 12 1M3.500 12.500Q4.500 5 12 4M6 12.500Q7 8 12 7M8.500 12.500q.5-2.500 3.500-3"/><circle cx="11.300" cy="11.600" r="1.300" fill="#fff" stroke="none"/></svg>
    <span class="eng">ENG</span>
    <div class="clock">3:53 PM<br>15/07/2024</div>
    <svg class="t7" width="26" height="26" viewBox="0 0 26 26"><path d="M0 1h17v12H9l-3 3v-3H0z" fill="#fff"/><path d="M3 4.500h11M3 7.500h11M3 10.500h7" stroke="#252525"/><circle cx="16" cy="17" r="8" fill="#333" stroke="#999"/><text x="16" y="21.500" class="badge">1</text></svg>
    <i class="peek"></i>
  </div>
</footer>
</body>
</html>
```
FILE: styles.css
```css
* { box-sizing: border-box; }
body { margin: 0; width: 1920px; height: 1080px; overflow: hidden; background: #343434; color: #f0f0f0; font: 11px/13px "Noto Sans", "Open Sans", sans-serif; display: flex; flex-direction: column; white-space: nowrap; }
svg { display: block; flex: none; overflow: visible; }
i { display: block; flex: none; }
.defs { position: absolute; }
h1, h2 { margin: 0; font-weight: 400; }
.vbar { width: 1px; height: 13px; background: #2a2a2a; }

.titlebar { height: 31px; flex: none; background: #4d4d4d; border-top: 1px solid #1b1b1b; border-bottom: 1px solid #303030; display: grid; grid-template-columns: 1fr auto 1fr; align-items: center; }
.quick { display: flex; align-items: center; padding-left: 2px; }
.quick .vbar { margin-left: 5px; }
.q1 { margin-left: 6px; } .q2 { margin-left: 7px; } .q3 { margin-left: 7px; } .q4 { margin-left: 6px; } .q5 { margin-left: 6px; }
.quick .q5 + .vbar { margin-left: 10px; }
.titlebar h1 { font-size: 12px; letter-spacing: -.26px; color: #fff; line-height: 14px; }
.wincontrols { display: flex; justify-content: flex-end; gap: 25px; padding-right: 14px; align-items: center; }

.tabs { height: 26px; flex: none; background: #404040; border-bottom: 1px solid #202020; display: flex; align-items: flex-start; }
.file { width: 55px; height: 24px; margin-top: 1px; background: linear-gradient(#df6418, #c04800); border: 1px solid #e8702a; border-bottom: 0; border-radius: 3px 3px 0 0; text-align: center; font-weight: 400; line-height: 22px; font-size: 12px; }
.tab { height: 25px; line-height: 27px; text-align: center; }
.home { width: 62px; padding-left: 2px; margin-left: 1px; }
.tab.active { width: 51px; height: 25px; margin-top: 1px; line-height: 24px; background: linear-gradient(#585858, #525252); border: 1px solid #202020; border-bottom: 0; border-radius: 3px 3px 0 0; color: #fff; padding-right: 1px; }
.proj { width: 62px; } .tools { width: 54px; } .outs { width: 72px; }
.tabright { margin-left: auto; display: flex; align-items: center; height: 24px; }
.typehere { width: 230px; height: 22px; margin-top: 1px; background: #2e2e2e; border: 1px solid #222; border-radius: 3px; display: flex; align-items: center; gap: 4px; padding: 0 0 1px 7px; font-size: 12px; letter-spacing: -.17px; }
.share { width: 59px; height: 19px; margin-left: 5px; background: #676767; border-radius: 3px; display: flex; align-items: center; gap: 4px; padding: 0 0 1px 7px; font-size: 11.5px; letter-spacing: -.3px; }
.tabright .vbar { margin: 0 7px 0 6px; }
.dd { margin-left: 7px; } .up { margin: 1px 9px 0 13px; }

.ribbon { height: 93px; flex: none; background: linear-gradient(#535353, #404040 88px); display: flex; position: relative; }
.ribbon::after { content: ""; position: absolute; left: 0; right: 0; top: 89px; height: 4px; background: #404040; border-top: 1px solid #202020; }
.group { height: 89px; border-right: 1px solid #303030; display: flex; flex-direction: column; justify-content: space-between; }
.group h2 { font-size: 11px; text-align: center; color: #fff; line-height: 14px; margin-bottom: 2px; letter-spacing: .12px; }
.tools-row { display: flex; padding-top: 6px; height: 72px; }
.btn { height: 64px; display: flex; flex-direction: column; align-items: center; padding-top: 3px; text-align: center; letter-spacing: -.15px; }
.btn > svg { margin-bottom: 3px; }
.btn span { line-height: 13px; }
.btn span svg { display: inline-block; vertical-align: 3px; margin-left: 2px; }
.btn span svg.c { margin: 0; }
.btn.on { background: #687684; border: 1px solid #b3dbff; padding-top: 2px; }
.w44 { width: 44px; } .w45 { width: 45px; } .w50 { width: 50px; } .w54 { width: 54px; } .w58 { width: 58px; } .w60 { width: 60px; } .w62 { width: 62px; } .w65 { width: 65px; } .w66 { width: 66px; } .w76 { width: 76px; } .w92 { width: 92px; }
.w45 > svg, .w65 > svg { margin-right: 1px; }
.g-system { width: 369px; } .g-system .tools-row { padding-left: 4px; }
.g-collab { width: 80px; }
.g-help { width: 116px; } .g-help .tools-row { padding-left: 2px; }
.g-zoom { width: 144px; } .g-zoom .tools-row { padding-left: 3px; }
.g-pcb { width: 314px; } .g-pcb .tools-row { padding-left: 2px; }
.g-view { width: 181px; } .g-view .tools-row { padding-left: 4px; }
.g-mask { width: 224px; } .g-mask h2 { padding-right: 3px; }
.smalls { padding: 9px 0 0 5px; display: flex; flex-direction: column; gap: 13px; }
.smalls div { display: flex; gap: 3px; align-items: center; height: 16px; letter-spacing: -.05px; }
.mask { padding: 6px 0 0 9px; display: flex; flex-direction: column; }
.lvl { height: 22px; display: flex; align-items: flex-start; }
.lvl label { width: 66px; padding-top: 3px; }
.clear { display: flex; gap: 3px; align-items: center; height: 18px; margin-left: -3px; }

.work { height: 838px; flex: none; display: flex; padding-left: 3px; }
.panel { width: 280px; flex: none; padding-top: 3px; display: flex; flex-direction: column; }
.phead { width: 277px; height: 23px; background: #4d4d4d; display: flex; align-items: center; padding: 0 7px 0 5px; gap: 9px; font-size: 11.500px; }
.phead b { margin: 0 auto 2px 0; font-weight: 600; }
.pbox { width: 277px; height: 789px; background: #3b3b3b; border: solid #404040; border-width: 1px 8px 8px 8px; padding: 5px 7px; box-shadow: inset 0 0 0 1px #242424; }
.psearch { height: 21px; background: #2c2c2c; border: 1px solid #222; border-radius: 4px; display: flex; align-items: center; gap: 6px; padding-left: 6px; }
.psearch span { margin-bottom: 1px; letter-spacing: -.1px; }
hr { margin: 5px 0 0; border: 0; height: 1px; background: #242424; }
.tree { padding-top: 11px; margin: 0 -1px; }
.row { height: 16px; display: flex; align-items: center; letter-spacing: -.12px; }
.row > span:not(.cell) { margin-bottom: 3px; }
.row .cell { flex: 1; min-width: 0; height: 16px; line-height: 13px; border-top: 1px solid #353535; padding-left: 1px; }
.row .t { margin: 0 4px; }
.row .pg { margin: 0 9px 0 4px; }
.row .pg + .t { margin-left: 0; }
.row b { font-weight: 600; letter-spacing: .02px; }
.r0 span { margin-left: 2px; }
.r1 { padding-left: 4px; } .r1 > svg:nth-child(2) { margin: 0 2px 0 5px; }
.r1 > svg:first-child, .r2 > svg:first-child { margin-top: 1px; }
.r1 > svg:first-child { margin-left: -1px; }
.r1 > svg:nth-child(2) { margin-left: 6px; }
.r2 { padding-left: 15px; } .r2 > svg:nth-child(2) { margin: 0 4px 0 5px; }
.r3 { padding-left: 38px; letter-spacing: -.17px; } .r3 > svg:first-child { margin: 0 3px 0 0; }
.clip { overflow: hidden; flex: 1; margin-bottom: 2px; letter-spacing: -.05px; }
.row .boxed { display: flex; align-items: center; border: 1px solid #6587a6; background: #4b4b4b; margin-left: -1px; }
.boxed b { flex: 1; margin-bottom: 2px; } .row .boxed .t { margin-right: 3px; }
.row .sel { display: flex; align-items: center; background: #6485a4; border: 0; color: #fff; }
.ptabs { display: flex; height: 22px; }
.ptabs span { height: 19px; border: 1px solid #222; border-radius: 0 0 4px 4px; padding: 2px 6px; background: #3a3a3a; letter-spacing: -.1px; }
.ptabs .cur { border-top: 0; background: #404040; color: #fff; width: 53px; padding-top: 3px; } .ptabs span + span { width: 33px; }

.editor { flex: 1; }
.docs { height: 28px; display: flex; align-items: flex-end; }
.doc { display: flex; align-items: center; height: 26px; padding-bottom: 1px; }
.d1 { gap: 4px; padding-left: 6px; width: 61px; letter-spacing: -.1px; }
.d2 { gap: 6px; width: 291px; letter-spacing: -.04px; }
.d3 { gap: 6px; width: 191px; height: 24px; background: #585858; border: 1px solid #222; border-bottom: 0; border-radius: 2px 2px 0 0; padding: 0 0 1px 6px; color: #fff; margin-bottom: 1px; letter-spacing: -.07px; }
.silk text { font-family: "DejaVu Sans Mono", monospace; fill: #fff; stroke: #fff; stroke-width: .9px; }
.silk .fine { stroke-width: .4px; }
.layers { height: 25px; display: flex; align-items: flex-start; }
.ls { width: 46px; height: 15px; margin: 3px 4px 0 3px; border: 1px solid #222; border-radius: 3px; background: #484848; display: flex; gap: 4px; align-items: center; }
.ls i { width: 24px; height: 13px; background: #de6300; }
.ly { height: 19px; border: 1px solid #222; border-left: 0; border-radius: 0 0 3px 3px; display: flex; gap: 8px; align-items: center; padding-left: 6px; letter-spacing: -.1px; }
.ly i { width: 10px; height: 10px; border: 1px solid #aaa; margin-bottom: 2px; }
.ly.cur { background: #4a4a4a; border: 1px solid #222; border-top: 0; color: #fff; font-weight: 600; letter-spacing: -.05px; padding-left: 5px; }
.l1 { width: 98px; } .l2 { width: 111px; } .l3 { width: 91px; } .l4 { width: 108px; } .l5 { width: 86px; } .l6 { width: 103px; }
.ly.l2 { letter-spacing: -.3px; } .ly.l4 { letter-spacing: -.25px; }
.c-top { background: #de6300; } .c-bot { background: #0080b4; } .c-to { background: #eee4e4; } .c-bo { background: #c8c8d2; } .c-ts { background: #b45000; } .c-bs { background: #006080; }

.msgbar { height: 25px; flex: none; margin: 0 3px; background: #404040; padding: 3px 1px; }
.msgbar span { display: block; width: 60px; height: 20px; line-height: 18px; text-align: center; background: #4d4d4d; border: 1px solid #222; border-radius: 4px; letter-spacing: -.1px; }
.status { height: 24px; flex: none; margin-top: 3px; background: #404040; display: flex; align-items: center; padding-left: 5px; }
.status span { margin-bottom: 1px; }
.status i { width: 2px; height: 17px; margin-top: 6px; background: #343434; }
.xy { width: 107px; letter-spacing: -.38px; } .grid { width: 373px; letter-spacing: -.2px; } .s2 { margin-left: 484px; }

.taskbar { height: 40px; flex: none; background: #262626; display: flex; }
.slot { width: 48px; height: 40px; margin-right: 1px; display: flex; align-items: center; justify-content: center; flex: none; }
.s48 { margin: 0; } .tv { margin-right: 3px; }
.slot.run { background: linear-gradient(#76b9ff, #76b9ff) 4px 38px / 40px 2px no-repeat; }
.slot.multi { background: linear-gradient(90deg, #76b9ff 31px, #5684b5 31px) 4px 38px / 40px 2px no-repeat; }
.slot.act { background: linear-gradient(#76b9ff, #76b9ff) 0 38px / 48px 2px no-repeat #545454; }
.ico, .ps, .ai, .b4, .b4a, .badge { text-anchor: middle; font-family: "Open Sans", sans-serif; fill: #fff; font-weight: 700; font-size: 10.5px; }
.ps, .ai { font-size: 12px; font-weight: 600; fill: #35c6f5; } .ai { fill: #ff8a1e; }
.b4 { font-size: 12px; font-weight: 300; fill: #909a9a; } .b4a { font-size: 11.5px; font-weight: 400; fill: #3ccac4; }
.badge { font-size: 12px; font-weight: 600; }
.tray { margin-left: auto; display: flex; align-items: center; }
.t1 { margin-right: 12px; } .t2 { margin-right: 9px; } .t3 { margin-right: 8px; } .t4 { margin-right: 8px; } .t5 { margin-right: 10px; } .t6 { margin-right: 10px; margin-top: 2px; }
.eng { width: 36px; font-size: 12px; letter-spacing: -.5px; margin-bottom: 1px; }
.clock { width: 58px; margin-right: 18px; text-align: center; font-size: 12px; line-height: 18px; letter-spacing: -.5px; margin-bottom: 1px; }
.t7 { margin-top: 7px; }
.peek { width: 1px; height: 40px; background: #777; margin: 0 4px 0 10px; }
```
